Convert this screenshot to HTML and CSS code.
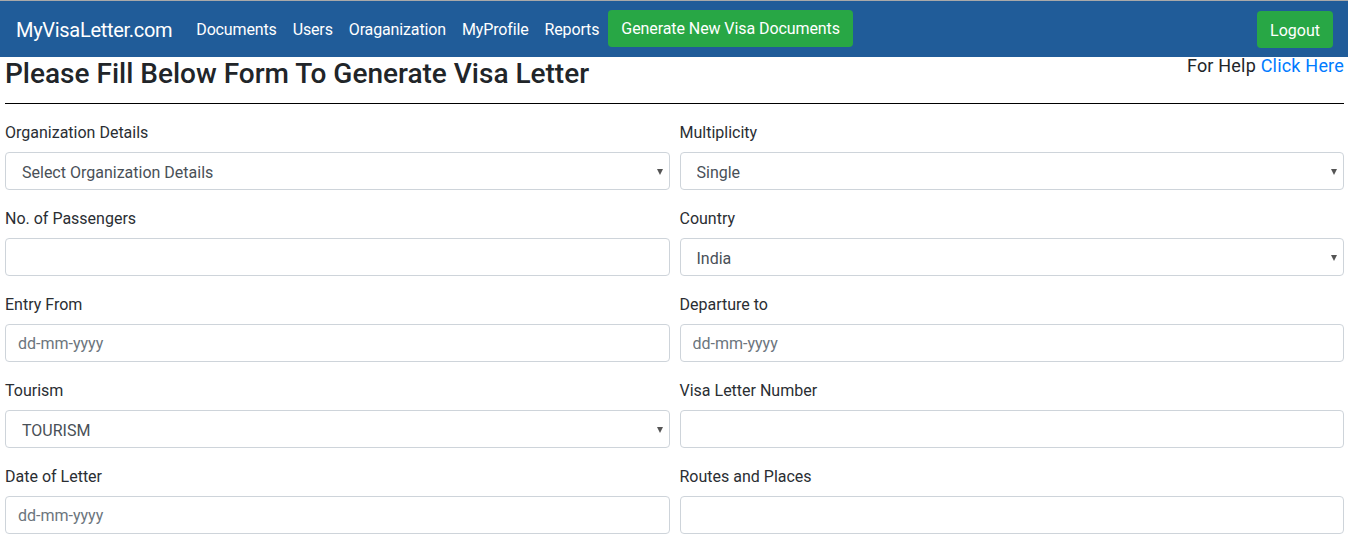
FILE: index.html
```html
<!DOCTYPE html>
<html lang="en">
<head>
<meta charset="utf-8">
<title>MyVisaLetter.com</title>
<link rel="stylesheet" href="styles.css">
</head>
<body>
<nav class="navbar">
  <a class="brand" href="#">MyVisaLetter.com</a>
  <ul class="nav-links">
    <li><a href="#">Documents</a></li>
    <li><a href="#">Users</a></li>
    <li><a href="#">Oraganization</a></li>
    <li><a href="#">MyProfile</a></li>
    <li><a href="#">Reports</a></li>
  </ul>
  <a class="btn btn-success btn-generate" href="#">Generate New Visa Documents</a>
  <a class="btn btn-success btn-logout" href="#">Logout</a>
</nav>
<main class="page">
  <div class="page-head">
    <h3 class="title">Please Fill Below Form To Generate Visa Letter</h3>
    <div class="help">For Help <a href="#">Click Here</a></div>
  </div>
  <hr class="rule">
  <form class="form-grid">
    <div class="form-group">
      <label>Organization Details</label>
      <div class="select-wrap"><select class="form-control"><option>Select Organization Details</option></select></div>
    </div>
    <div class="form-group">
      <label>Multiplicity</label>
      <div class="select-wrap"><select class="form-control"><option>Single</option></select></div>
    </div>
    <div class="form-group">
      <label>No. of Passengers</label>
      <input class="form-control" type="text">
    </div>
    <div class="form-group">
      <label>Country</label>
      <div class="select-wrap"><select class="form-control"><option>India</option></select></div>
    </div>
    <div class="form-group">
      <label>Entry From</label>
      <input class="form-control" type="text" placeholder="dd-mm-yyyy">
    </div>
    <div class="form-group">
      <label>Departure to</label>
      <input class="form-control" type="text" placeholder="dd-mm-yyyy">
    </div>
    <div class="form-group">
      <label>Tourism</label>
      <div class="select-wrap"><select class="form-control"><option>TOURISM</option></select></div>
    </div>
    <div class="form-group">
      <label>Visa Letter Number</label>
      <input class="form-control" type="text">
    </div>
    <div class="form-group">
      <label>Date of Letter</label>
      <input class="form-control" type="text" placeholder="dd-mm-yyyy">
    </div>
    <div class="form-group">
      <label>Routes and Places</label>
      <input class="form-control" type="text">
    </div>
  </form>
</main>
</body>
</html>
```
FILE: styles.css
```css
* { box-sizing: border-box; }
html, body { margin: 0; padding: 0; }
body {
  font-family: Roboto, "Liberation Sans", sans-serif;
  font-size: 16px;
  line-height: 1.5;
  color: #212529;
  background: #fff;
  border-top: 1px solid #a9a9a9;
}
a { text-decoration: none; }

.navbar {
  display: flex;
  align-items: center;
  height: 56px;
  background: #205c99;
  padding: 0 15px 0 16px;
}
.brand {
  color: #fff;
  font-size: 20px;
  line-height: 30px;
  margin-right: 16px;
  white-space: nowrap;
  letter-spacing: -0.3px;
  padding-top: 2px;
}
.nav-links {
  display: flex;
  list-style: none;
  margin: 0;
  padding: 0;
}
.nav-links a {
  display: block;
  color: #fff;
  padding: 9px 8px 7px;
  letter-spacing: -0.14px;
}
.btn {
  display: inline-block;
  color: #fff;
  padding: 6px 13px;
  border-radius: 4px;
  line-height: 25px;
  white-space: nowrap;
}
.btn-success { background: #28a745; }
.btn-generate { margin-top: -2px; margin-left: 1px; letter-spacing: -0.08px; }
.btn-logout { margin-left: auto; padding: 7px 13px 5px; margin-top: 1px; }

.page {
  padding: 0 4px 0 5px;
}
.page-head {
  display: flex;
  justify-content: space-between;
  align-items: flex-start;
}
.title {
  margin: 0;
  font-size: 28px;
  font-weight: 500;
  line-height: 34px;
}
.help {
  font-size: 18px;
  line-height: 16px;
  margin-top: 1px;
  letter-spacing: 0.2px;
}
.help a { color: #007bff; }
.rule {
  border: 0;
  border-top: 1px solid #000;
  margin: 12px 0 16px;
}
.form-grid {
  display: grid;
  grid-template-columns: 1fr 1fr;
  column-gap: 10px;
}
.form-group {
  margin-bottom: 16px;
}
.form-group label {
  display: block;
  margin-bottom: 7px;
  padding-top: 1px;
  line-height: 24px;
  color: #2a2e33;
}
.form-control {
  display: block;
  width: 100%;
  height: 38px;
  padding: 6px 12px;
  font: inherit;
  font-size: 16px;
  color: #495057;
  background: #fff;
  border: 1px solid #ced4da;
  border-radius: 4px;
  outline: none;
}
.form-control::placeholder { color: #6c757d; opacity: 1; }
select.form-control {
  -webkit-appearance: none;
  appearance: none;
  padding: 8px 12px 4px 16px;
}
.select-wrap { position: relative; }
.select-wrap::after {
  content: "";
  position: absolute;
  right: 7px;
  top: 17px;
  border-left: 3px solid transparent;
  border-right: 3px solid transparent;
  border-top: 6px solid #555;
  pointer-events: none;
}
```
